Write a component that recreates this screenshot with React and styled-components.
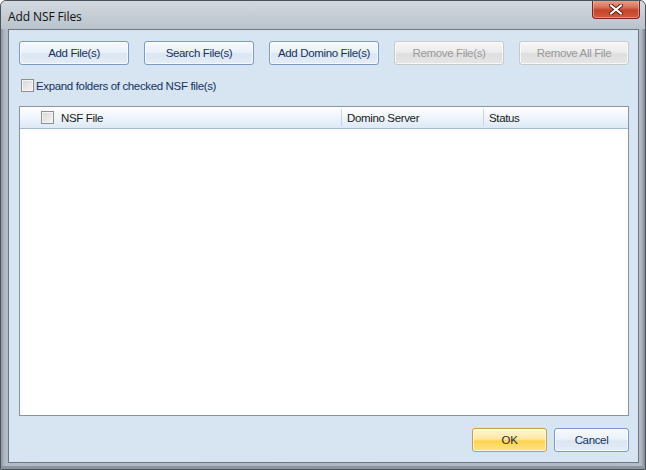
import React from 'react'
import styled, { createGlobalStyle } from 'styled-components';

const Global = createGlobalStyle`
    html, body { margin: 0; padding: 0; background: #fff; }
    body { font-family: 'Liberation Sans', 'DejaVu Sans', sans-serif; }
`;

const Window = styled.div`
    position: relative;
    width: 646px;
    height: 470px;
    box-sizing: border-box;
    display: flex;
    flex-direction: column;
    border: 1px solid #4d5259;
    border-radius: 6px 6px 0 0;
    background: linear-gradient(90deg, #8f98a3 0px, #b3bcc6 4px, #aeb7c2 50%, #b3bcc6 calc(100% - 4px), #7f8892 100%);
    box-shadow: inset 0 -3px 0 #8c959f;
    overflow: hidden;
`;

const TitleBar = styled.div`
    height: 28px;
    display: flex;
    align-items: flex-start;
    justify-content: space-between;
    padding-left: 7px;
    background: linear-gradient(180deg, #d3d9e0 0%, #c3cbd4 60%, #bac3cd 100%);
`;

const Title = styled.span`
    margin-top: 7px;
    font-family: 'Open Sans', 'Liberation Sans', sans-serif;
    font-size: 12px;
    color: #101010;
    letter-spacing: -0.1px;
`;

const CloseBtn = styled.div`
    width: 46px;
    height: 18px;
    margin-right: 5px;
    margin-top: -1px;
    border: 1px solid #6e2a1e;
    border-top: none;
    border-radius: 0 0 4px 4px;
    background: linear-gradient(180deg, #e8a594 0%, #d7735c 40%, #c4452c 55%, #cf5a3d 100%);
    display: flex;
    align-items: center;
    justify-content: center;
    box-shadow: inset 0 0 0 1px rgba(255,200,190,0.5);
`;

const Client = styled.div`
    flex: 1;
    margin: 0 6px 6px 7px;
    border: 1px solid #6f7882;
    background: #d7e4f2;
    display: flex;
    flex-direction: column;
    padding: 11px 9px 10px 10px;
`;

const Toolbar = styled.div`
    display: flex;
    justify-content: space-between;
`;

const Button = styled.button`
    width: ${p => p.$w || 110}px;
    height: 24px;
    padding: 0;
    box-sizing: border-box;
    border-radius: 3px;
    font-family: 'Liberation Sans', 'DejaVu Sans', sans-serif;
    font-size: 11.5px;
    letter-spacing: -0.35px;
    color: #15325e;
    border: 1px solid #7d9ac2;
    background: linear-gradient(180deg, #f7fafd 0%, #eaf1f9 45%, #dbe6f3 55%, #e4edf7 100%);
    box-shadow: inset 0 0 0 1px rgba(255,255,255,0.7);

    &:disabled {
        color: #9a9a9a;
        border-color: #c9c9c9;
        background: linear-gradient(180deg, #f6f6f6 0%, #ececec 45%, #dedede 55%, #e6e6e6 100%);
    }
`;

const OkButton = styled(Button)`
    border-color: #c4a04d;
    color: #2b2b2b;
    background: linear-gradient(180deg, #fff6d6 0%, #ffe8a0 45%, #ffd352 55%, #ffe28c 100%);
`;

const Box = styled.span`
    display: inline-block;
    width: 11px;
    height: 11px;
    border: 1px solid #8f8f8f;
    background: linear-gradient(135deg, #d6d6d6 0%, #f6f6f6 100%);
    box-shadow: inset 0 0 0 1px #f4f4f4;
    flex-shrink: 0;
`;

const CheckRow = styled.label`
    display: flex;
    align-items: center;
    gap: 2px;
    margin-top: 14px;
    padding-left: 2px;
    height: 13px;
    font-size: 11.5px;
    letter-spacing: -0.35px;
    color: #15325e;
`;

const List = styled.div`
    flex: 1;
    margin-top: 14px;
    border: 1px solid #8a949e;
    background: #fff;
    display: flex;
    flex-direction: column;
`;

const Header = styled.div`
    height: 21px;
    display: flex;
    align-items: stretch;
    border-bottom: 1px solid #a6bcd8;
    background: linear-gradient(180deg, #ffffff 0%, #f1f6fc 45%, #dde9f7 100%);
`;

const Col = styled.div`
    width: ${p => p.$w ? p.$w + 'px' : 'auto'};
    flex: ${p => p.$w ? 'none' : 1};
    display: flex;
    align-items: center;
    gap: 7px;
    padding-left: ${p => p.$pad || 5}px;
    box-sizing: border-box;
    font-size: 11.5px;
    letter-spacing: -0.35px;
    color: #1a1a1a;
    border-right: ${p => p.$last ? 'none' : '1px solid #c9d5e4'};
    margin: ${p => p.$last ? '0 3px 0 0' : '2px 0'};
`;

const Footer = styled.div`
    display: flex;
    justify-content: flex-end;
    gap: 7px;
    margin-top: 12px;
`;

export default function App() {
  return (
    <Window>
        <Global />
        <TitleBar>
            <Title>Add NSF Files</Title>
            <CloseBtn>
                <svg width="14" height="11" viewBox="0 0 14 11">
                    <path d="M2 1.5 L12 9.5 M12 1.5 L2 9.5" stroke="#5a2018" strokeWidth="4" strokeLinecap="round" />
                    <path d="M2 1.5 L12 9.5 M12 1.5 L2 9.5" stroke="#fff" strokeWidth="2.2" strokeLinecap="round" />
                </svg>
            </CloseBtn>
        </TitleBar>
        <Client>
            <Toolbar>
                <Button>Add File(s)</Button>
                <Button>Search File(s)</Button>
                <Button>Add Domino File(s)</Button>
                <Button disabled>Remove File(s)</Button>
                <Button disabled>Remove All File</Button>
            </Toolbar>
            <CheckRow><Box />Expand folders of checked NSF file(s)</CheckRow>
            <List>
                <Header>
                    <Col $w={322} $pad={21}><Box />NSF File</Col>
                    <Col $w={142}>Domino Server</Col>
                    <Col $last>Status</Col>
                </Header>
            </List>
            <Footer>
                <OkButton $w={75}>OK</OkButton>
                <Button $w={75}>Cancel</Button>
            </Footer>
        </Client>
    </Window>
  )
}
